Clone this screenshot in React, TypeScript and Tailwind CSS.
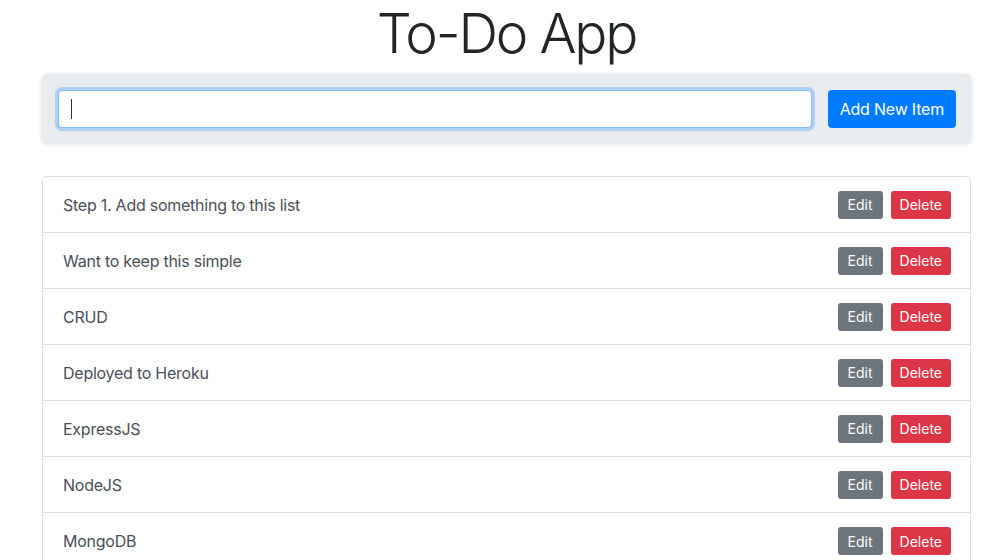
const items = [
  "Step 1. Add something to this list",
  "Want to keep this simple",
  "CRUD",
  "Deployed to Heroku",
  "ExpressJS",
  "NodeJS",
  "MongoDB",
];

export default function App() {
  return (
    <div className="min-h-[560px] bg-white font-['Inter',sans-serif] text-[#212529]">
      <div className="w-[929px] ml-[42px]">
        <h1 className="text-center text-[55px] font-light leading-[1.2] mb-[8px] tracking-[-2.2px]">
          To-Do App
        </h1>
        <AddForm />
        <ul className="mt-[33px] border border-[#dfdfdf] rounded-[4px] bg-white">
          {items.map((item) => (
            <TodoRow key={item} text={item} />
          ))}
        </ul>
      </div>
    </div>
  );
}

function AddForm() {
  return (
    <div className="flex items-center gap-4 bg-[#e9ecef] rounded-[5px] p-4 pr-[15px] h-[69px] shadow-[0_1px_4px_rgba(0,0,0,0.15)]">
      <div className="flex-1 h-[38px] bg-white border border-[#80bdff] rounded-[4px] shadow-[0_0_0_3px_rgba(0,123,255,0.25)] flex items-center px-3">
        <span className="w-px h-[20px] bg-[#333]" />
      </div>
      <button className="h-[38px] px-3 bg-[#007bff] text-white text-[16px] rounded-[4px] leading-none tracking-[-0.2px]">
        Add New Item
      </button>
    </div>
  );
}

function TodoRow({ text }: { text: string }) {
  return (
    <li className="flex items-center justify-between h-[56px] pl-5 pr-[19px] border-b border-[#dfdfdf] last:border-b-0">
      <span className="text-[16px] text-[#495057] tracking-[-0.25px]">{text}</span>
      <div className="flex gap-2">
        <button className="h-[28px] px-[10px] bg-[#6c757d] text-white text-[14px] rounded-[3px]">
          Edit
        </button>
        <button className="h-[28px] px-[9px] bg-[#dc3545] text-white text-[14px] rounded-[3px]">
          Delete
        </button>
      </div>
    </li>
  );
}
